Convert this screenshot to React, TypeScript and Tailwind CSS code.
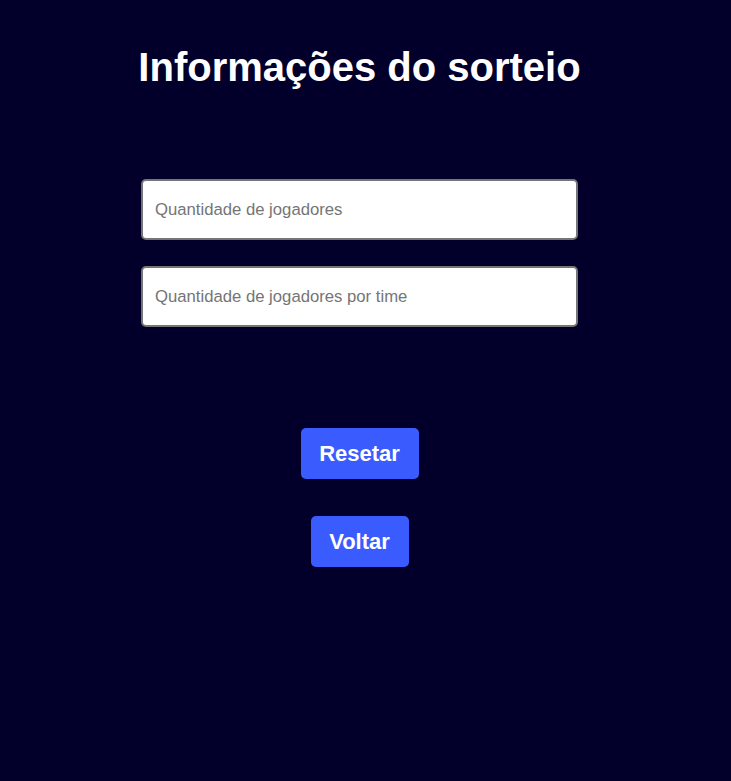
export default function App() {
  return (
    <div className="min-h-[781px] w-full bg-[#02002b] pr-[12px] flex flex-col items-center font-['Liberation_Sans',Arial,sans-serif]">
      <h1 className="mt-[44px] text-[40px] leading-[46px] font-bold text-white">Informações do sorteio</h1>

      <div className="mt-[89px] flex w-[437px] flex-col gap-[26px]">
        <input
          type="text"
          placeholder="Quantidade de jogadores"
          className="h-[61px] w-full rounded-[5px] border-2 border-[#767676] bg-white px-[12px] text-[16.7px] text-black placeholder:text-[#757575] outline-none"
        />
        <input
          type="text"
          placeholder="Quantidade de jogadores por time"
          className="h-[61px] w-full rounded-[5px] border-2 border-[#767676] bg-white px-[12px] text-[16.7px] text-black placeholder:text-[#757575] outline-none"
        />
      </div>

      <div className="mt-[101px] flex flex-col items-center gap-[37px]">
        <button className="h-[51px] w-[118px] rounded-[5px] bg-[#3a5cff] text-[22px] font-bold text-white">Resetar</button>
        <button className="h-[51px] w-[98px] rounded-[5px] bg-[#3a5cff] text-[22px] font-bold text-white">Voltar</button>
      </div>
    </div>
  );
}
